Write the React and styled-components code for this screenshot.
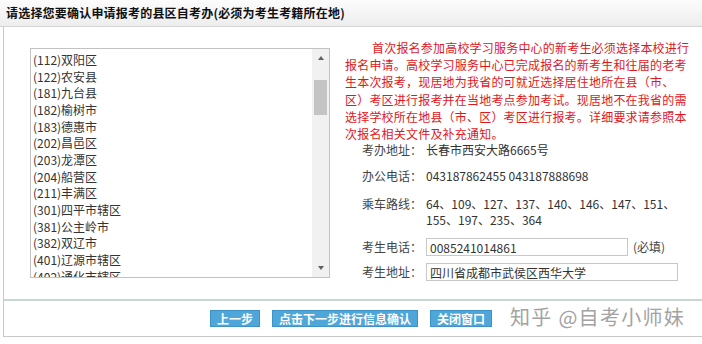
import styled, { createGlobalStyle } from "styled-components";

const GlobalStyle = createGlobalStyle`
  body {
    margin: 0;
    background: #fff;
    font-family: "Noto Sans CJK SC", "Liberation Sans", sans-serif;
    color: #333;
  }
`;

const districts = [
  "(112)双阳区",
  "(122)农安县",
  "(181)九台县",
  "(182)榆树市",
  "(183)德惠市",
  "(202)昌邑区",
  "(203)龙潭区",
  "(204)船营区",
  "(211)丰满区",
  "(301)四平市辖区",
  "(381)公主岭市",
  "(382)双辽市",
  "(401)辽源市辖区",
  "(402)通化市辖区",
];

const notice = [
  "首次报名参加高校学习服务中心的新考生必须选择本校进行",
  "报名申请。高校学习服务中心已完成报名的新考生和往届的老考",
  "生本次报考，现居地为我省的可就近选择居住地所在县（市、",
  "区）考区进行报考并在当地考点参加考试。现居地不在我省的需",
  "选择学校所在地县（市、区）考区进行报考。详细要求请参照本",
  "次报名相关文件及补充通知。",
];

export default function App() {
  return (
    <>
      <GlobalStyle />
      <Header>请选择您要确认申请报考的县区自考办(必须为考生考籍所在地)</Header>
      <Panel>
        <Content>
          <ListBox>
            <ListItems>
              {districts.map((d) => (
                <ListItem key={d}>{d}</ListItem>
              ))}
            </ListItems>
            <ScrollBar>
              <Arrow $dir="up" />
              <Thumb />
              <Arrow $dir="down" />
            </ScrollBar>
          </ListBox>
          <InfoColumn>
            <Notice>
              {notice.map((line, i) => (
                <NoticeLine key={i} $first={i === 0}>
                  {line}
                </NoticeLine>
              ))}
            </Notice>
            <InfoRow $mt={0}>
              <Label>考办地址：</Label>
              <Value>长春市西安大路6665号</Value>
            </InfoRow>
            <InfoRow $mt={10}>
              <Label>办公电话：</Label>
              <Value>043187862455 043187888698</Value>
            </InfoRow>
            <InfoRow $mt={12}>
              <Label>乘车路线：</Label>
              <Value>
                64、109、127、137、140、146、147、151、
                <br />
                155、197、235、364
              </Value>
            </InfoRow>
            <InfoRow $mt={10}>
              <Label>考生电话：</Label>
              <Value>
                <TextInput $w={202} defaultValue="0085241014861" />
                <Hint>(必填)</Hint>
              </Value>
            </InfoRow>
            <InfoRow $mt={7}>
              <Label>考生地址：</Label>
              <Value>
                <TextInput $w={252} defaultValue="四川省成都市武侯区西华大学" />
              </Value>
            </InfoRow>
          </InfoColumn>
        </Content>
        <Footer>
          <Button>上一步</Button>
          <Button>点击下一步进行信息确认</Button>
          <Button>关闭窗口</Button>
          <Watermark>知乎 @自考小师妹</Watermark>
        </Footer>
      </Panel>
    </>
  );
}

const Header = styled.div`
  box-sizing: border-box;
  height: 27px;
  padding-left: 6px;
  line-height: 26px;
  font-size: 12px;
  font-weight: bold;
  letter-spacing: 0.2px;
  color: #111;
  background: linear-gradient(#fcfcfc, #ededed);
  border-bottom: 1px solid #d4d4d4;
`;

const Panel = styled.div`
  margin-left: 3px;
  border-left: 1px solid #c8c8c8;
  border-bottom: 1px solid #c8c8c8;
`;

const Content = styled.div`
  display: flex;
  height: 272px;
`;

const ListBox = styled.div`
  box-sizing: border-box;
  display: flex;
  width: 300px;
  height: 230px;
  margin: 21px 0 0 26px;
  border: 1px solid #c2c2c2;
  overflow: hidden;
`;

const ListItems = styled.div`
  flex: 1;
  padding: 3px 0 0 2px;
  overflow: hidden;
`;

const ListItem = styled.div`
  font-size: 12px;
  line-height: 16.67px;
  color: #333;
  white-space: nowrap;
`;

const ScrollBar = styled.div`
  display: flex;
  flex-direction: column;
  align-items: center;
  width: 17px;
  background: #f1f1f1;
`;

const Arrow = styled.div`
  width: 0;
  height: 0;
  margin: ${(p) => (p.$dir === "up" ? "7px 0 0" : "auto 0 7px")};
  border-left: 3.5px solid transparent;
  border-right: 3.5px solid transparent;
  border-bottom: ${(p) => (p.$dir === "up" ? "4px solid #606060" : "none")};
  border-top: ${(p) => (p.$dir === "down" ? "4px solid #606060" : "none")};
`;

const Thumb = styled.div`
  width: 13px;
  height: 35px;
  margin-top: 20px;
  background: #c4c4c4;
`;

const InfoColumn = styled.div`
  display: flex;
  flex-direction: column;
  width: 346px;
  margin-left: 15px;
  padding-top: 12px;
`;

const Notice = styled.div`
  font-size: 12px;
  line-height: 17.2px;
  color: #e0171c;
  letter-spacing: 0.2px;
`;

const NoticeLine = styled.div`
  white-space: nowrap;
  padding-left: ${(p) => (p.$first ? "27px" : "0")};
`;

const InfoRow = styled.div`
  display: flex;
  align-items: center;
  margin-top: ${(p) => p.$mt}px;
  font-size: 12px;
  line-height: 16px;
`;

const Label = styled.div`
  align-self: flex-start;
  width: 77px;
  text-align: right;
  color: #444;
  white-space: nowrap;
  ${InfoRow}:has(input) & {
    align-self: center;
  }
`;

const Value = styled.div`
  display: flex;
  align-items: center;
  flex-wrap: wrap;
  margin-left: 4px;
  color: #333;
  white-space: nowrap;
`;

const TextInput = styled.input`
  box-sizing: border-box;
  width: ${(p) => p.$w}px;
  height: 18px;
  padding: 0 3px;
  border: 1px solid #c8c8c8;
  font-family: inherit;
  font-size: 12px;
  color: #333;
  outline: none;
`;

const Hint = styled.span`
  margin-left: 5px;
  color: #444;
`;

const Footer = styled.div`
  position: relative;
  display: flex;
  align-items: center;
  justify-content: center;
  gap: 12px;
  height: 35px;
  padding-right: 4px;
  border-top: 2px solid #c9d7d2;
`;

const Button = styled.button`
  height: 17px;
  padding: 0 6px;
  border: 1px solid #3d93c6;
  background: #4fa6d9;
  color: #fff;
  font-family: inherit;
  font-size: 12px;
  font-weight: bold;
  line-height: 15px;
  cursor: pointer;
`;

const Watermark = styled.div`
  position: absolute;
  left: 506px;
  top: 3px;
  font-size: 20px;
  line-height: 26px;
  color: #a3a3a3;
  letter-spacing: 1.3px;
  white-space: nowrap;
  pointer-events: none;
`;
